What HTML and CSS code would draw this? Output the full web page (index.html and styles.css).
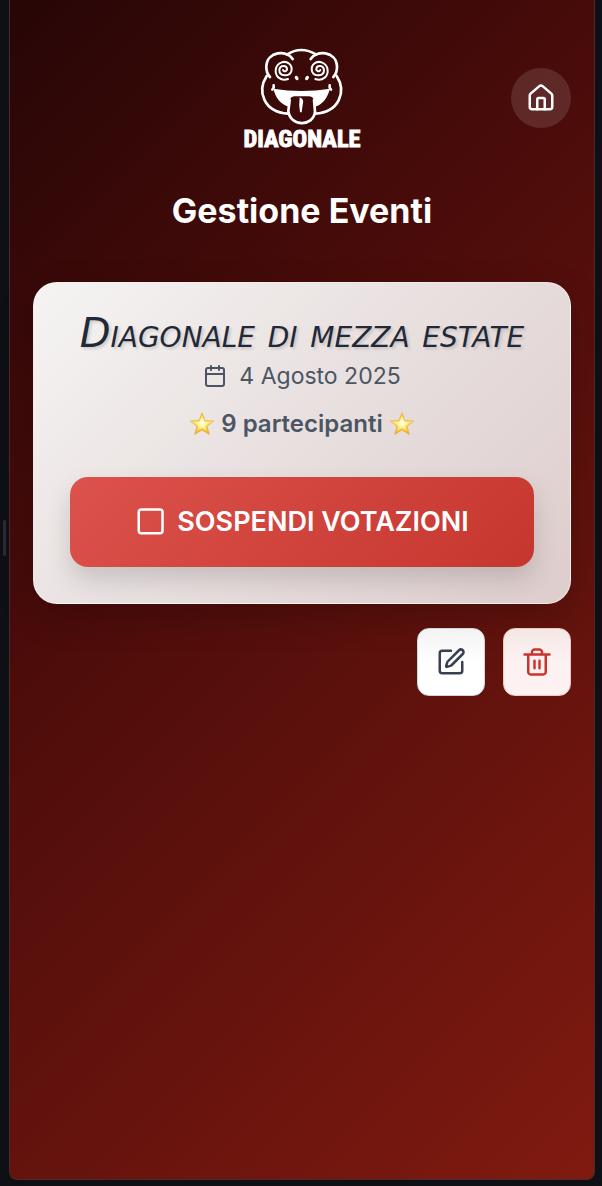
FILE: index.html
```html
<!DOCTYPE html>
<html lang="it">
<head>
<meta charset="utf-8">
<meta name="viewport" content="width=device-width, initial-scale=1">
<title>Gestione Eventi</title>
<link rel="stylesheet" href="styles.css">
</head>
<body>
<svg class="defs" width="0" height="0" aria-hidden="true">
  <defs>
    <linearGradient id="gold" x1="0" y1="0" x2="0" y2="1">
      <stop offset="0" stop-color="#f3c64a"/>
      <stop offset=".45" stop-color="#fbe36e"/>
      <stop offset="1" stop-color="#eda51c"/>
    </linearGradient>
    <radialGradient id="shine" cx=".5" cy=".42" r=".5">
      <stop offset="0" stop-color="#fffef0"/>
      <stop offset=".5" stop-color="#fff7a8"/>
      <stop offset="1" stop-color="#fbdc58"/>
    </radialGradient>
    <symbol id="star" viewBox="0 0 24 24">
      <path d="M12 .8 15.1 8.6 23.7 9 17 14.3 19.4 22.5 12 17.9 4.6 22.5 7 14.3.3 9 8.9 8.6Z" fill="url(#gold)" stroke="#e9ae36" stroke-width=".7" stroke-linejoin="round"/>
      <path d="M12 4 14.3 9.7 20.3 10 15.6 13.8 17.2 19.4 12 16.2 6.8 19.4 8.4 13.8 3.7 10 9.7 9.7Z" fill="url(#shine)"/>
    </symbol>
  </defs>
</svg>
<div class="app">
  <header class="header">
    <svg class="logo" viewBox="42 24 348 300" role="img" aria-label="Diagonale">
      <g fill="none" stroke="#fff" stroke-width="8" stroke-linecap="round" stroke-linejoin="round">
        <path d="M171 44Q213 16 259 44"/>
        <path d="M188 57C170 28 112 34 109 78Q108 98 120 111"/>
        <path d="M242 57C260 28 318 34 321 78Q322 98 310 111"/>
        <path d="M110 108C80 155 102 216 174 221"/>
        <path d="M320 108C350 155 328 216 256 221"/>
        <path d="M127 149Q133 143 131 136M303 149Q297 143 299 136"/>
      </g>
      <g fill="none" stroke="#fff" stroke-width="6" stroke-linecap="round">
        <path d="M159 90C161 97 172 94 171 86C169 75 149 75 148 90C148 110 177 111 184 94C189 73 170 62 155 67C134 74 132 101 146 113Q159 123 174 117"/>
        <path d="M271 90C269 97 258 94 259 86C261 75 281 75 282 90C282 110 253 111 246 94C241 73 260 62 275 67C296 74 298 101 284 113Q271 123 256 117"/>
      </g>
      <g fill="#fff">
        <ellipse cx="200" cy="114" rx="5" ry="7" transform="rotate(-35 200 114)"/>
        <ellipse cx="231" cy="114" rx="5" ry="7" transform="rotate(35 231 114)"/>
        <path d="M130 146Q215 160 300 146C292 176 275 195 254 200L252 181Q249 169 236 169H193Q181 170 179 183L177 200C152 193 137 174 130 146Z"/>
      </g>
      <path d="M179 180 175 213C180 260 250 262 255 215L252 180" fill="none" stroke="#fff" stroke-width="8" stroke-linecap="round"/>
      <path d="M209 172Q224 178 218 194L215 217H210Q206 194 209 172Z" fill="#fff"/>
      <text class="logo-text" x="216" y="322" text-anchor="middle">DIAGONALE</text>
    </svg>
    <a class="home" href="#" aria-label="Home">
      <svg class="icon-lg" viewBox="0 0 24 24"><path d="M15 21v-8a1 1 0 0 0-1-1h-4a1 1 0 0 0-1 1v8"/><path d="M3 10a2 2 0 0 1 .7-1.5l7-6a2 2 0 0 1 2.6 0l7 6A2 2 0 0 1 21 10v9a2 2 0 0 1-2 2H5a2 2 0 0 1-2-2z"/></svg>
    </a>
  </header>
  <h1 class="title">Gestione Eventi</h1>
  <main class="events">
    <article class="card">
      <h2 class="event-name">Diagonale di mezza estate</h2>
      <p class="date">
        <svg class="icon-md" viewBox="0 0 24 24"><path d="M8 2v4M16 2v4M3 10h18"/><rect x="3" y="4" width="18" height="18" rx="2"/></svg>
        <span>4 Agosto 2025</span>
      </p>
      <p class="count">
        <svg class="star" aria-hidden="true"><use href="#star"/></svg>
        <span>9 partecipanti</span>
        <svg class="star" aria-hidden="true"><use href="#star"/></svg>
      </p>
      <button class="suspend" type="button">
        <svg class="icon-lg" viewBox="0 0 24 24"><rect x="3" y="2" width="19" height="19" rx="2"/></svg>
        <span>SOSPENDI VOTAZIONI</span>
      </button>
    </article>
    <div class="actions">
      <button class="action edit" type="button" aria-label="Modifica">
        <svg class="icon-lg" viewBox="0 0 24 24"><path d="M12 3H5a2 2 0 0 0-2 2v14a2 2 0 0 0 2 2h14a2 2 0 0 0 2-2v-7"/><path d="M18.4 2.6a2.1 2.1 0 0 1 3 3l-9 9a2 2 0 0 1-.9.5l-2.8.8a.5.5 0 0 1-.6-.6l.8-2.8a2 2 0 0 1 .5-.9z"/></svg>
      </button>
      <button class="action delete" type="button" aria-label="Elimina">
        <svg class="icon-lg" viewBox="0 0 24 24"><path d="M2 6h20M19 6v14c0 1-1 2-2 2H7c-1 0-2-1-2-2V6M8 6V4c0-1 1-2 2-2h4c1 0 2 1 2 2v2M10 11v6M14 11v6"/></svg>
      </button>
    </div>
  </main>
</div>
<span class="handle"></span>
</body>
</html>
```
FILE: styles.css
```css
* { box-sizing: border-box; }

body {
  margin: 0;
  min-height: 100vh;
  display: flex;
  padding: 0 7px 6px 9px;
  background: #0e1015;
  font-family: Inter, "Liberation Sans", sans-serif;
}

.defs { position: absolute; }

.app {
  flex: 1;
  padding: 48px 23px 24px;
  border: solid #4a2a2a;
  border-width: 0 1px 1px;
  border-radius: 0 0 8px 8px;
  background: linear-gradient(135deg, #270606 0%, #4a0c0a 37%, #801a10 100%);
}

.header {
  display: grid;
  grid-template-columns: 60px 1fr 60px;
  align-items: center;
}

.logo {
  grid-column: 2;
  justify-self: center;
  width: 116px;
  height: 100px;
  overflow: visible;
}

.logo-text {
  fill: #fff;
  stroke: #fff;
  stroke-width: 3px;
  font: bold 73px "Liberation Sans Narrow", "Roboto Condensed", "Liberation Sans", sans-serif;
}

.home {
  width: 60px;
  height: 60px;
  display: grid;
  place-items: center;
  border-radius: 50%;
  background: rgba(255, 255, 255, 0.12);
  color: #fff;
}

.icon-lg, .icon-md {
  fill: none;
  stroke: currentColor;
  stroke-width: 2;
  stroke-linecap: round;
  stroke-linejoin: round;
}

.icon-lg { width: 30px; height: 30px; }
.icon-md { width: 24px; height: 24px; }

.title {
  margin: 39px 0 47px;
  color: #fff;
  font-size: 34px;
  line-height: 48px;
  font-weight: 700;
  text-align: center;
}

.card {
  padding: 35px 36px 36px;
  border: 1px solid rgba(255, 255, 255, 0.5);
  border-radius: 24px;
  background: linear-gradient(135deg, #f5f4f2 0%, #e8dfdf 50%, #ddcdcc 100%);
  box-shadow: 0 12px 36px rgba(0, 0, 0, 0.2);
  text-align: center;
}

.event-name {
  margin: 0;
  color: #1f2937;
  font: italic small-caps 400 40px/30px "Rock Salt", "DejaVu Sans", sans-serif;
  text-shadow: 2px 2px 3px rgba(0, 0, 0, 0.15);
  white-space: nowrap;
}

.date, .count {
  margin: 0;
  display: flex;
  justify-content: center;
  align-items: center;
  color: #4b5563;
  line-height: 36px;
}

.date {
  gap: 12px;
  margin-top: 10px;
  font-size: 23px;
}

.count {
  gap: 7px;
  margin-top: 12px;
  font-size: 24px;
  font-weight: 600;
}

.star { width: 24px; height: 24px; }

.suspend {
  width: 100%;
  margin-top: 35px;
  padding: 24px;
  display: flex;
  justify-content: center;
  align-items: center;
  gap: 12px;
  border: 0;
  border-radius: 18px;
  background: linear-gradient(135deg, #dc524c, #c5362e);
  box-shadow: 0 12px 24px rgba(0, 0, 0, 0.15);
  color: #fff;
  font: 600 27px/42px Inter, "Liberation Sans", sans-serif;
}

.actions {
  margin-top: 24px;
  display: flex;
  justify-content: flex-end;
  gap: 18px;
}

.action {
  width: 68px;
  height: 68px;
  padding: 0;
  display: grid;
  place-items: center;
  border: 1px solid;
  border-radius: 12px;
}

.edit {
  border-color: #d1d5db;
  background: linear-gradient(#f3f3f3, #fff 50%);
  color: #374151;
}

.delete {
  border-color: #f3c4c4;
  background: linear-gradient(#f4e8e7, #fdf1f1 50%);
  color: #cb342c;
}

.handle {
  position: absolute;
  left: 3px;
  top: 520px;
  width: 3px;
  height: 36px;
  border-radius: 2px;
  background: #282b33;
}
```
